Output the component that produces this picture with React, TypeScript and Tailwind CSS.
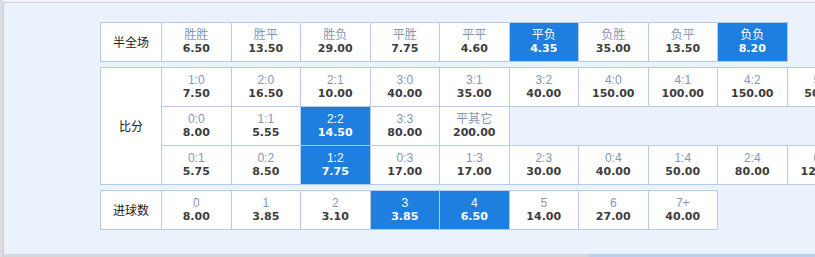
type Cell = { k: string; v: string; on?: boolean };

const halfFull: Cell[] = [
  { k: "胜胜", v: "6.50" },
  { k: "胜平", v: "13.50" },
  { k: "胜负", v: "29.00" },
  { k: "平胜", v: "7.75" },
  { k: "平平", v: "4.60" },
  { k: "平负", v: "4.35", on: true },
  { k: "负胜", v: "35.00" },
  { k: "负平", v: "13.50" },
  { k: "负负", v: "8.20", on: true },
];

const winRow: Cell[] = [
  { k: "1:0", v: "7.50" },
  { k: "2:0", v: "16.50" },
  { k: "2:1", v: "10.00" },
  { k: "3:0", v: "40.00" },
  { k: "3:1", v: "35.00" },
  { k: "3:2", v: "40.00" },
  { k: "4:0", v: "150.00" },
  { k: "4:1", v: "100.00" },
  { k: "4:2", v: "150.00" },
  { k: "5:0", v: "50.00" },
  { k: "5:1", v: "70.00" },
  { k: "5:2", v: "150.00" },
  { k: "胜其它", v: "150.00" },
];

const drawRow: Cell[] = [
  { k: "0:0", v: "8.00" },
  { k: "1:1", v: "5.55" },
  { k: "2:2", v: "14.50", on: true },
  { k: "3:3", v: "80.00" },
  { k: "平其它", v: "200.00" },
];

const loseRow: Cell[] = [
  { k: "0:1", v: "5.75" },
  { k: "0:2", v: "8.50" },
  { k: "1:2", v: "7.75", on: true },
  { k: "0:3", v: "17.00" },
  { k: "1:3", v: "17.00" },
  { k: "2:3", v: "30.00" },
  { k: "0:4", v: "40.00" },
  { k: "1:4", v: "50.00" },
  { k: "2:4", v: "80.00" },
  { k: "0:5", v: "120.00" },
  { k: "1:5", v: "150.00" },
  { k: "2:5", v: "200.00" },
  { k: "负其它", v: "150.00" },
];

const goals: Cell[] = [
  { k: "0", v: "8.00" },
  { k: "1", v: "3.85" },
  { k: "2", v: "3.10" },
  { k: "3", v: "3.85", on: true },
  { k: "4", v: "6.50", on: true },
  { k: "5", v: "14.00" },
  { k: "6", v: "27.00" },
  { k: "7+", v: "40.00" },
];

function OddsCell({ c }: { c: Cell }) {
  return (
    <div
      className={
        "h-[39px] flex flex-col items-center justify-center border-r border-b border-[#b6cbe8] " +
        (c.on ? "bg-[#1f7fe0] text-white" : "bg-white")
      }
    >
      <span
        className={
          "text-[12px] leading-[14px] font-['Liberation_Sans','Noto_Sans_CJK_SC',sans-serif] " +
          (c.on ? "text-white" : "text-[#8696b3]")
        }
      >
        {c.k}
      </span>
      <span
        className={
          "text-[11px] leading-[14px] font-bold font-['DejaVu_Sans',sans-serif] " +
          (c.on ? "text-white" : "text-[#3c3c3c]")
        }
      >
        {c.v}
      </span>
    </div>
  );
}

function Label({ text, rows }: { text: string; rows?: boolean }) {
  return (
    <div
      className={
        "flex items-center justify-center bg-white border-r border-b border-[#b6cbe8] text-[12px] text-[#222] font-['Noto_Sans_CJK_SC',sans-serif] " +
        (rows ? "row-span-3" : "h-[39px]")
      }
    >
      {text}
    </div>
  );
}

export default function App() {
  return (
    <div className="w-[815px] h-[257px] overflow-hidden bg-[#f2f3f5] pt-[2px] border-l-[3px] border-[#dcdcdc]">
      <div className="h-[255px] flex flex-col bg-[#eaf2fc] border-t border-l border-[#c4d0e2]">
        <div className="flex-1 flex flex-col gap-[5px] pt-[19px] pl-[96px]">
          <div className="grid grid-cols-[61px_repeat(9,69.5px)] w-fit border-t border-l border-[#b6cbe8]">
            <Label text="半全场" />
            {halfFull.map((c) => (
              <OddsCell key={c.k} c={c} />
            ))}
          </div>

          <div className="grid grid-cols-[61px_repeat(13,69.5px)] w-fit border-t border-l border-[#b6cbe8]">
            <Label text="比分" rows />
            {winRow.map((c) => (
              <OddsCell key={c.k} c={c} />
            ))}
            {drawRow.map((c) => (
              <OddsCell key={c.k} c={c} />
            ))}
            <div className="col-span-8 border-b border-[#b6cbe8]" />
            {loseRow.map((c) => (
              <OddsCell key={c.k} c={c} />
            ))}
          </div>

          <div className="grid grid-cols-[61px_repeat(8,69.5px)] w-fit border-t border-l border-[#b6cbe8]">
            <Label text="进球数" />
            {goals.map((c) => (
              <OddsCell key={c.k} c={c} />
            ))}
          </div>
        </div>
        <div className="h-[3px] flex">
          <div className="w-[585px] bg-[#d6d8db]" />
          <div className="flex-1 bg-[#b9cfee]" />
        </div>
      </div>
    </div>
  );
}
